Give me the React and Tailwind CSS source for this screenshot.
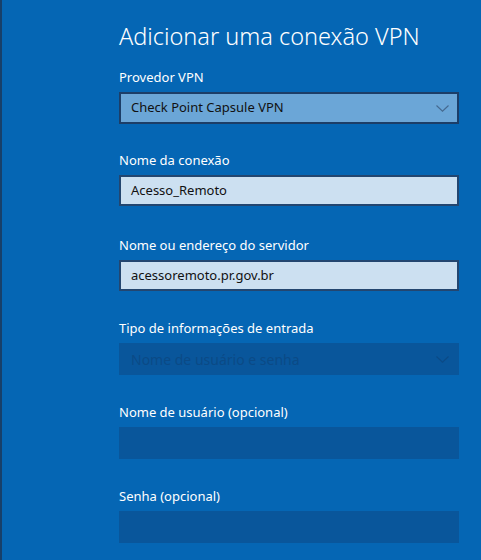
const font = { fontFamily: '"Noto Sans", "Open Sans", sans-serif' };

function Chevron({ className }) {
  return (
    <svg width="13" height="7" viewBox="0 0 13 7" className={className}>
      <path d="M0.5 0.5 L6.5 6.2 L12.5 0.5" fill="none" stroke="currentColor" strokeWidth="1.1" />
    </svg>
  );
}

function Label({ children }) {
  return <div className="h-[20px] text-[13px] leading-[20px] text-white">{children}</div>;
}

function Field({ label, value, className = '' }) {
  return (
    <div className={className}>
      <Label>{label}</Label>
      <div className="mt-[5px] h-[31px] border-2 border-[#234670] bg-[#cce0f1] flex items-center px-[10px] text-[13px] text-[#111]">
        {value}
      </div>
    </div>
  );
}

function DisabledField({ label, value, select, className = '' }) {
  return (
    <div className={className}>
      <Label>{label}</Label>
      <div className="mt-[5px] h-[32px] bg-[#09569b] flex items-center justify-between pl-[12px] pr-[10px] text-[14px] text-[#0b4a86]">
        <span>{value}</span>
        {select && <Chevron className="text-[#0b4a86]" />}
      </div>
    </div>
  );
}

export default function App() {
  return (
    <div className="w-[481px] h-[560px] bg-[#0566b4] border-l-2 border-[#17406a] overflow-hidden" style={font}>
      <div className="pl-[117px] pr-[22px] pt-[21px]">
        <h1 className="h-[30px] text-[23.5px] leading-[30px] font-light text-white">
          Adicionar uma conexão VPN
        </h1>
        <div className="mt-[16px]">
          <Label>Provedor VPN</Label>
          <div className="mt-[5px] h-[32px] border-2 border-[#1c3e68] bg-[#6ba6d7] flex items-center justify-between pl-[10px] pr-[8px] text-[13px] text-[#111]">
            <span>Check Point Capsule VPN</span>
            <Chevron className="text-[#45698f]" />
          </div>
        </div>
        <Field className="mt-[26px]" label="Nome da conexão" value="Acesso_Remoto" />
        <Field className="mt-[29px]" label="Nome ou endereço do servidor" value="acessoremoto.pr.gov.br" />
        <DisabledField className="mt-[27px]" label="Tipo de informações de entrada" value="Nome de usuário e senha" select />
        <DisabledField className="mt-[27px]" label="Nome de usuário (opcional)" />
        <DisabledField className="mt-[27px]" label="Senha (opcional)" />
      </div>
    </div>
  );
}
